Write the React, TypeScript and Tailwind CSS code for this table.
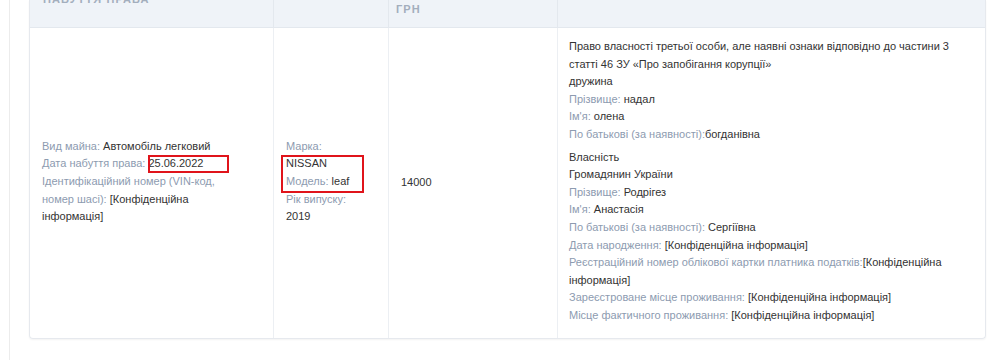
import React from "react";

type Field = { label: string; value: string; glued?: boolean };

function Labeled({ label, value, glued }: Field) {
  return (
    <div>
      <span className="text-[#8d9bb0]">{label}</span>
      {glued ? "" : " "}
      <span className="text-[#333]">{value}</span>
    </div>
  );
}

const spouse: Field[] = [
  { label: "Прізвище:", value: "надал" },
  { label: "Ім'я:", value: "олена" },
  { label: "По батькові (за наявності):", value: "богданівна", glued: true },
];

const owner: Field[] = [
  { label: "Прізвище:", value: "Родрігез" },
  { label: "Ім'я:", value: "Анастасія" },
  { label: "По батькові (за наявності):", value: "Сергіївна" },
  { label: "Дата народження:", value: "[Конфіденційна інформація]" },
  {
    label: "Реєстраційний номер облікової картки платника податків:",
    value: "[Конфіденційна інформація]",
    glued: true,
  },
  { label: "Зареєстроване місце проживання:", value: "[Конфіденційна інформація]" },
  { label: "Місце фактичного проживання:", value: "[Конфіденційна інформація]" },
];

export default function App() {
  return (
    <div
      className="relative h-[360px] w-[1000px] overflow-hidden bg-white text-[11px] leading-[17.6px] text-[#333]"
      style={{ fontFamily: '"Liberation Sans", Arial, sans-serif' }}
    >
      <div className="flex h-full">
        <div className="w-[9px] shrink-0" />
        <div className="flex-1 border-l border-[#ececec] pl-[19px]">
          <div className="w-[957px] rounded-b-[4px] border-x border-b border-[#e6e9ee] shadow-[0_1px_2px_rgba(0,0,0,0.05)]">
            {/* header, scrolled up */}
            <div className="flex h-[28px] overflow-hidden border-b border-[#e3e8ee] bg-[#eff3f8] text-[11px] font-bold uppercase leading-[14px] tracking-[1.1px] text-[#a3aebd]">
              <div className="flex w-[244px] flex-col justify-end border-r border-[#e3e8ee] pb-[21px] pl-[13px]">
                НАБУТТЯ ПРАВА
              </div>
              <div className="w-[115px] border-r border-[#e3e8ee]" />
              <div className="flex w-[169px] flex-col justify-end border-r border-[#e3e8ee] pb-[11px] pl-[7px]">
                ГРН
              </div>
              <div className="flex-1" />
            </div>

            {/* row */}
            <div className="flex">
              <div className="flex w-[244px] items-center border-r border-[#eceff3] pb-[2px] pl-[12px] pr-[40px]">
                <div>
                  <Labeled label="Вид майна:" value="Автомобіль легковий" />
                  <Labeled label="Дата набуття права:" value="25.06.2022" />
                  <Labeled
                    label="Ідентифікаційний номер (VIN-код, номер шасі):"
                    value="[Конфіденційна інформація]"
                  />
                </div>
              </div>
              <div className="flex w-[115px] items-center border-r border-[#eceff3] pb-[2px] px-[12px]">
                <div>
                  <div className="text-[#8d9bb0]">Марка:</div>
                  <div>NISSAN</div>
                  <Labeled label="Модель:" value="leaf" />
                  <div className="text-[#8d9bb0]">Рік випуску:</div>
                  <div>2019</div>
                </div>
              </div>
              <div className="flex w-[169px] items-center border-r border-[#eceff3] px-[12px]">
                14000
              </div>
              <div className="flex-1 pb-[13px] pl-[11px] pr-[12px] pt-[10px]">
                <div>
                  Право власності третьої особи, але наявні ознаки відповідно до частини 3 статті 46 ЗУ «Про
                  запобігання корупції»
                </div>
                <div>дружина</div>
                {spouse.map((f) => (
                  <Labeled key={f.label} {...f} />
                ))}
                <div className="mt-[5px]">Власність</div>
                <div>Громадянин України</div>
                {owner.map((f) => (
                  <Labeled key={f.label} {...f} />
                ))}
              </div>
            </div>
          </div>
        </div>
      </div>

      {/* red annotation boxes */}
      <div className="pointer-events-none absolute left-[148px] top-[155px] h-[18px] w-[81px] border-2 border-[#e0141b]" />
      <div className="pointer-events-none absolute left-[281px] top-[155px] h-[38px] w-[83px] border-2 border-[#e0141b]" />
    </div>
  );
}
